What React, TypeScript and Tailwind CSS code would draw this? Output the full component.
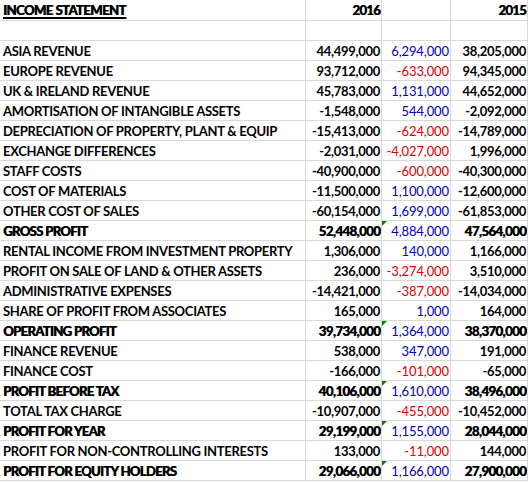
import React from 'react';

type Row = {
  label: string;
  y2016?: string;
  diff?: string;
  y2015?: string;
  bold?: boolean;
  flag?: boolean;
};

const rows: Row[] = [
  { label: 'ASIA REVENUE', y2016: '44,499,000', diff: '6,294,000', y2015: '38,205,000' },
  { label: 'EUROPE REVENUE', y2016: '93,712,000', diff: '-633,000', y2015: '94,345,000' },
  { label: 'UK & IRELAND REVENUE', y2016: '45,783,000', diff: '1,131,000', y2015: '44,652,000' },
  { label: 'AMORTISATION OF INTANGIBLE ASSETS', y2016: '-1,548,000', diff: '544,000', y2015: '-2,092,000' },
  { label: 'DEPRECIATION OF PROPERTY, PLANT & EQUIP', y2016: '-15,413,000', diff: '-624,000', y2015: '-14,789,000' },
  { label: 'EXCHANGE DIFFERENCES', y2016: '-2,031,000', diff: '-4,027,000', y2015: '1,996,000' },
  { label: 'STAFF COSTS', y2016: '-40,900,000', diff: '-600,000', y2015: '-40,300,000' },
  { label: 'COST OF MATERIALS', y2016: '-11,500,000', diff: '1,100,000', y2015: '-12,600,000' },
  { label: 'OTHER COST OF SALES', y2016: '-60,154,000', diff: '1,699,000', y2015: '-61,853,000' },
  { label: 'GROSS PROFIT', y2016: '52,448,000', diff: '4,884,000', y2015: '47,564,000', bold: true, flag: true },
  { label: 'RENTAL INCOME FROM INVESTMENT PROPERTY', y2016: '1,306,000', diff: '140,000', y2015: '1,166,000' },
  { label: 'PROFIT ON SALE OF LAND & OTHER ASSETS', y2016: '236,000', diff: '-3,274,000', y2015: '3,510,000' },
  { label: 'ADMINISTRATIVE EXPENSES', y2016: '-14,421,000', diff: '-387,000', y2015: '-14,034,000' },
  { label: 'SHARE OF PROFIT FROM ASSOCIATES', y2016: '165,000', diff: '1,000', y2015: '164,000' },
  { label: 'OPERATING PROFIT', y2016: '39,734,000', diff: '1,364,000', y2015: '38,370,000', bold: true, flag: true },
  { label: 'FINANCE REVENUE', y2016: '538,000', diff: '347,000', y2015: '191,000' },
  { label: 'FINANCE COST', y2016: '-166,000', diff: '-101,000', y2015: '-65,000' },
  { label: 'PROFIT BEFORE TAX', y2016: '40,106,000', diff: '1,610,000', y2015: '38,496,000', bold: true, flag: true },
  { label: 'TOTAL TAX CHARGE', y2016: '-10,907,000', diff: '-455,000', y2015: '-10,452,000' },
  { label: 'PROFIT FOR YEAR', y2016: '29,199,000', diff: '1,155,000', y2015: '28,044,000', bold: true, flag: true },
  { label: 'PROFIT FOR NON-CONTROLLING INTERESTS', y2016: '133,000', diff: '-11,000', y2015: '144,000' },
  { label: 'PROFIT FOR EQUITY HOLDERS', y2016: '29,066,000', diff: '1,166,000', y2015: '27,900,000', bold: true, flag: true },
];

const cell = 'h-5 border-r border-b border-[#d9d9d9] overflow-hidden whitespace-nowrap leading-5';
// extra-heavy look for the total rows (Lato has no black weight installed)
const heavy = '[text-shadow:0.7px_0_0_currentColor]';

const App: React.FC = () => {
  return (
    <div
      className="w-[528px] h-[482px] bg-white text-black text-[13px] font-bold"
      style={{ fontFamily: 'Lato, "Liberation Sans", sans-serif' }}
    >
      <div className="grid grid-cols-[306px_76px_69px_77px]">
        {/* header */}
        <div className={`${cell} h-[21px] pl-[3px] underline underline-offset-2 decoration-2 tracking-[-0.5px] ${heavy}`}>
          INCOME STATEMENT
        </div>
        <div className={`${cell} h-[21px] pr-[1px] text-right tracking-[-0.6px] ${heavy}`}>2016</div>
        <div className={`${cell} h-[21px]`}></div>
        <div className={`${cell} h-[21px] pr-[1px] text-right tracking-[-0.6px] ${heavy}`}>2015</div>

        {/* blank */}
        <div className={cell}></div>
        <div className={cell}></div>
        <div className={cell}></div>
        <div className={cell}></div>

        {rows.map((r) => {
          const neg = r.diff?.startsWith('-');
          return (
            <React.Fragment key={r.label}>
              <div className={`${cell} pl-[3px] ${r.bold ? `tracking-[-0.6px] ${heavy}` : 'tracking-[-0.3px]'}`}>
                {r.label}
              </div>
              <div className={`${cell} pr-[1px] text-right ${r.bold ? `tracking-[-0.5px] ${heavy}` : 'tracking-[-0.3px]'}`}>
                {r.y2016}
              </div>
              <div
                className={`${cell} relative pr-[1px] text-right font-normal tracking-[-0.1px] ${
                  neg ? 'text-[#e00000]' : 'text-[#0000c0]'
                }`}
              >
                {r.flag && (
                  <span className="absolute left-0 top-0 w-0 h-0 border-t-[5px] border-r-[5px] border-t-[#008000] border-r-transparent" />
                )}
                {r.diff}
              </div>
              <div className={`${cell} pr-[1px] text-right ${r.bold ? `tracking-[-0.5px] ${heavy}` : 'tracking-[-0.3px]'}`}>
                {r.y2015}
              </div>
            </React.Fragment>
          );
        })}
      </div>
    </div>
  );
};

export default App;
